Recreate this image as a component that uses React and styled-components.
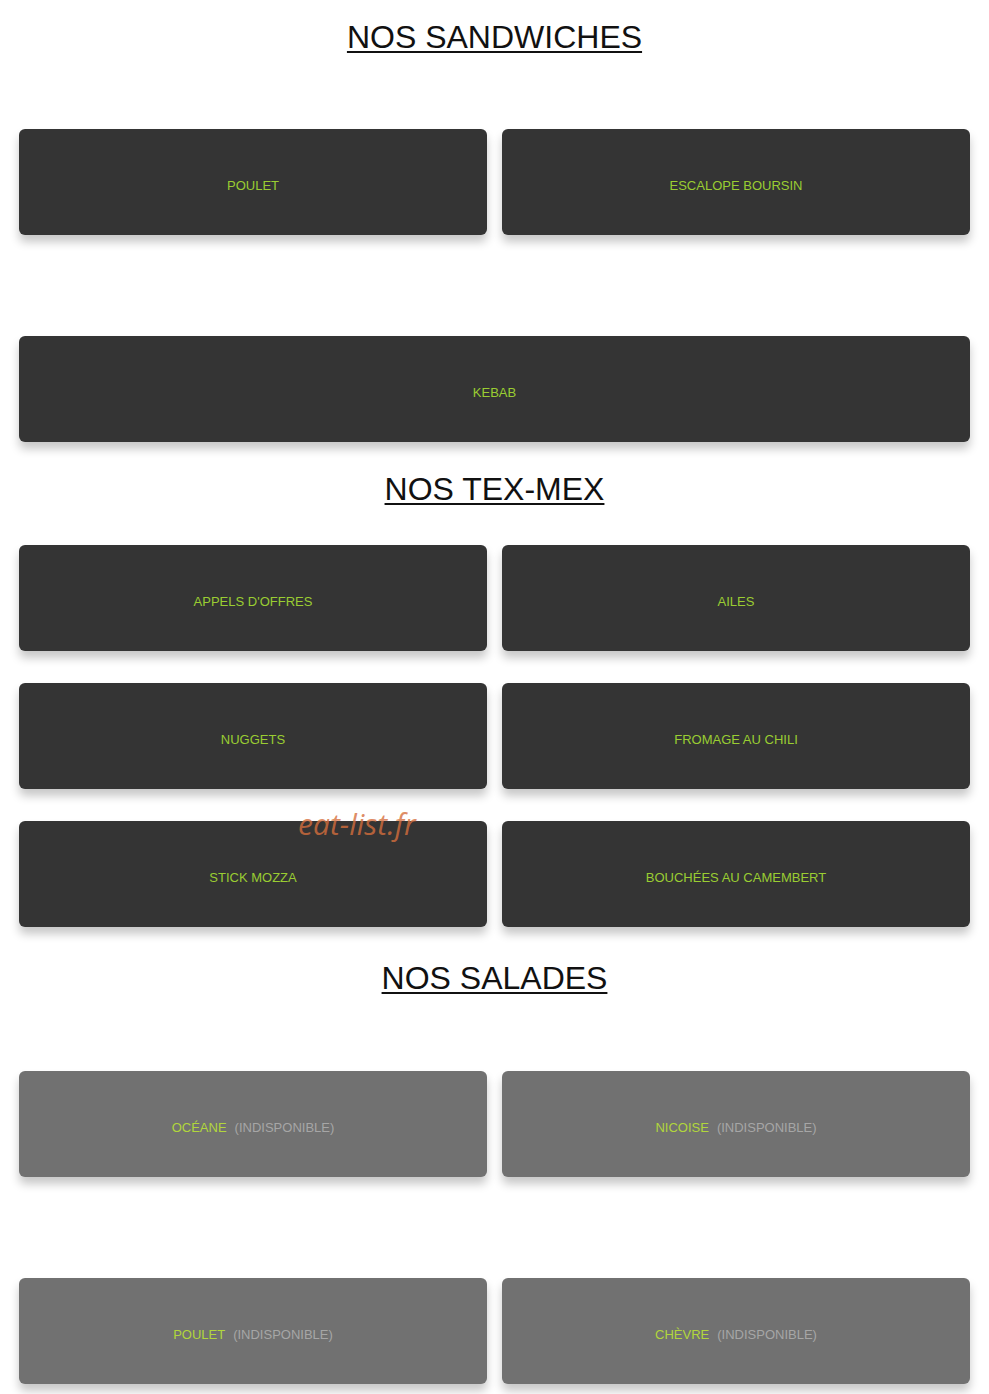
import styled, { createGlobalStyle } from "styled-components";

const GlobalStyle = createGlobalStyle`
    html, body {
        margin: 0;
        padding: 0;
        background: #ffffff;
        font-family: "Liberation Sans", Arial, sans-serif;
    }
`;

const Page = styled.div`
    position: relative;
    width: 989px;
    padding: 0 19px 10px;
    box-sizing: border-box;
`;

const Section = styled.section`
    padding-top: ${({ top }) => top}px;
`;

const Title = styled.h2`
    margin: 0;
    text-align: center;
    font-size: 32px;
    line-height: 37px;
    font-weight: normal;
    color: #111;
    text-decoration: underline;
    text-decoration-thickness: 2px;
    text-underline-offset: 3px;
`;

const Grid = styled.div`
    display: grid;
    grid-template-columns: 1fr 1fr;
    column-gap: 15px;
    row-gap: ${({ rowGap }) => rowGap}px;
    margin-top: ${({ gridTop }) => gridTop}px;
`;

const Card = styled.div`
    grid-column: ${({ wide }) => (wide ? "1 / span 2" : "auto")};
    height: 106px;
    padding-top: 6px;
    box-sizing: border-box;
    border-radius: 6px;
    background: ${({ off }) => (off ? "#717171" : "#343434")};
    box-shadow: 0 7px 10px rgba(0, 0, 0, 0.22);
    display: flex;
    align-items: center;
    justify-content: center;
    gap: 8px;
    font-size: 13px;
    text-transform: uppercase;
`;

const Name = styled.span`
    color: ${({ off }) => (off ? "#b1d63c" : "#9acd32")};
`;

const Unavailable = styled.span`
    color: #a6a6a6;
`;

const Watermark = styled.div`
    position: absolute;
    left: 298px;
    top: 803px;
    font-family: "Open Sans", sans-serif;
    font-style: italic;
    font-size: 30px;
    color: rgba(214, 110, 60, 0.8);
    pointer-events: none;
`;

const sections = [
    {
        title: "NOS SANDWICHES",
        top: 19, gridTop: 73, rowGap: 101,
        items: [
            { name: "Poulet" },
            { name: "Escalope Boursin" },
            { name: "Kebab", wide: true },
        ],
    },
    {
        title: "NOS TEX-MEX",
        top: 29, gridTop: 37, rowGap: 32,
        items: [
            { name: "Appels d'offres" },
            { name: "Ailes" },
            { name: "Nuggets" },
            { name: "Fromage au chili" },
            { name: "Stick mozza" },
            { name: "Bouchées au camembert" },
        ],
    },
    {
        title: "NOS SALADES",
        top: 33, gridTop: 74, rowGap: 101,
        items: [
            { name: "Océane", off: true },
            { name: "Nicoise", off: true },
            { name: "Poulet", off: true },
            { name: "Chèvre", off: true },
        ],
    },
];

function App() {
    return (
        <Page>
            <GlobalStyle />
            {sections.map((s) => (
                <Section key={s.title} top={s.top}>
                    <Title>{s.title}</Title>
                    <Grid gridTop={s.gridTop} rowGap={s.rowGap}>
                        {s.items.map((item) => (
                            <Card key={item.name} wide={item.wide} off={item.off}>
                                <Name off={item.off}>{item.name}</Name>
                                {item.off && <Unavailable>(indisponible)</Unavailable>}
                            </Card>
                        ))}
                    </Grid>
                </Section>
            ))}
            <Watermark>eat-list.fr</Watermark>
        </Page>
    );
}

export default App;
